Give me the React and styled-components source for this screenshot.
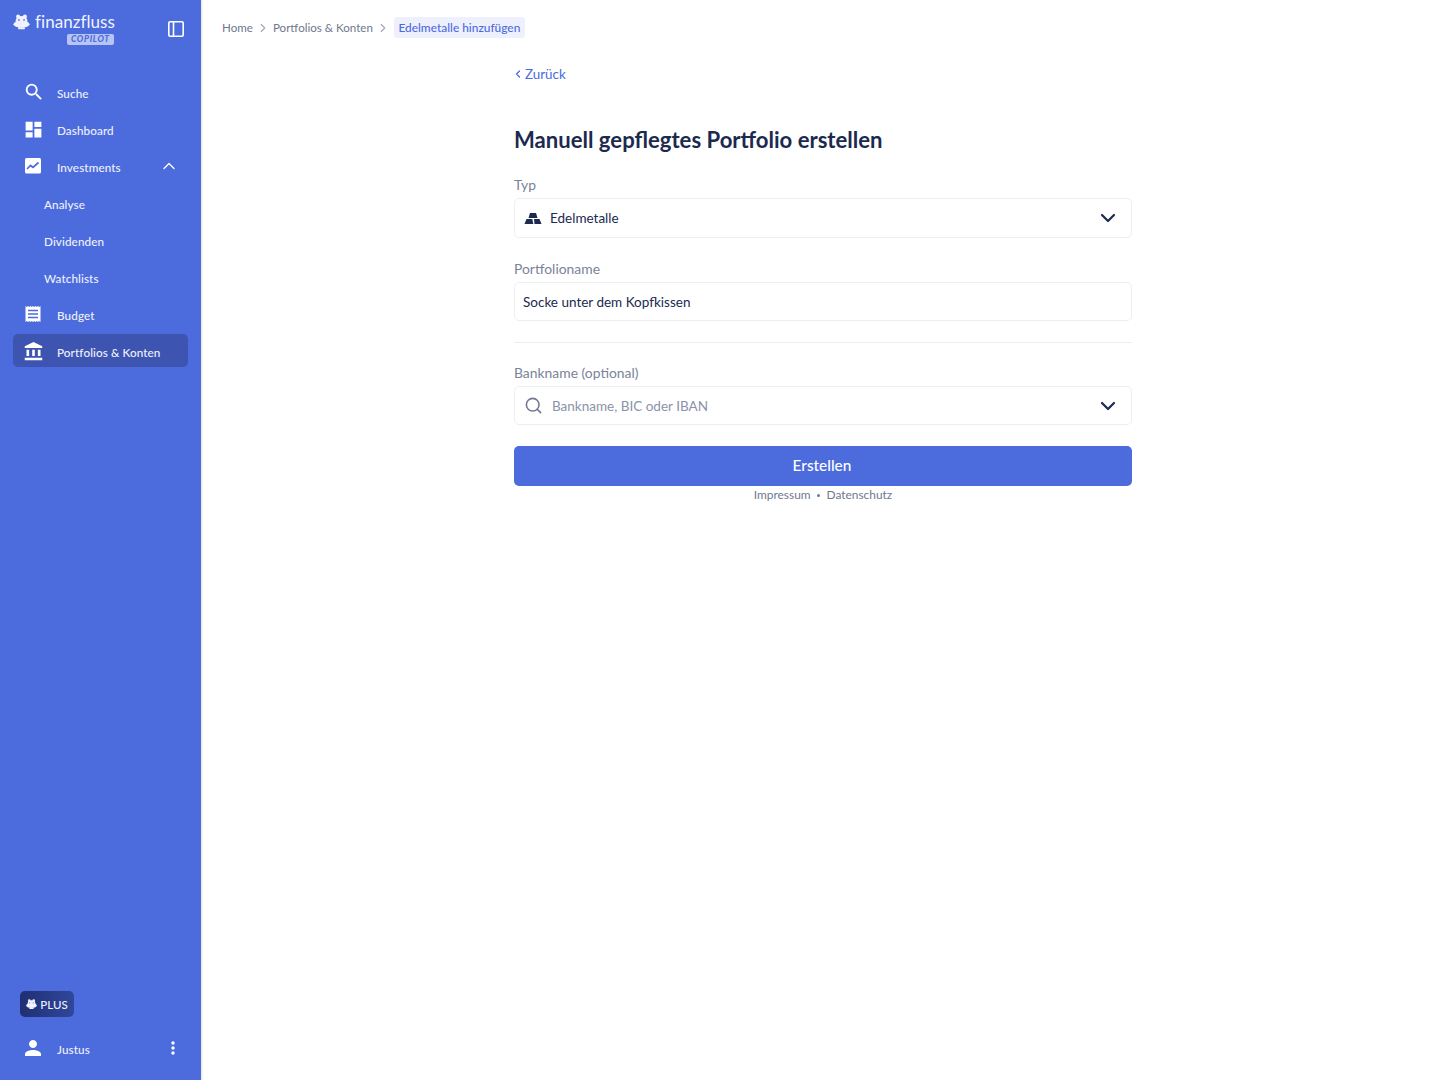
import React from 'react';
import styled, { createGlobalStyle } from 'styled-components';
import { MdSearch, MdDashboard, MdAccountBalance, MdPerson, MdMoreVert } from 'react-icons/md';
import { ChevronDown, ChevronUp, ChevronRight, ChevronLeft, Search } from 'lucide-react';

const Global = createGlobalStyle`
  html, body { margin: 0; padding: 0; background: #fff; }
  body { font-family: Lato, "Open Sans", sans-serif; color: #1b2a4e; }
  * { box-sizing: border-box; }
`;

const Page = styled.div`
  display: flex;
  height: 1080px;
`;

const Sidebar = styled.aside`
  width: 201px;
  flex-shrink: 0;
  background: #4c6bdd;
  color: #fff;
  display: flex;
  flex-direction: column;
  box-shadow: 1px 0 2px rgba(30, 40, 90, 0.15);
`;

const Header = styled.div`
  height: 75px;
  padding: 13px 17px 0 13px;
  display: flex;
  justify-content: space-between;
  align-items: flex-start;
`;

const Brand = styled.div`
  display: flex;
  flex-direction: column;
  align-items: flex-end;
`;

const BrandRow = styled.div`
  display: flex;
  align-items: center;
  gap: 5px;
  height: 18px;
`;

const BrandName = styled.span`
  font-size: 17px;
  line-height: 18px;
  letter-spacing: 0.05px;
  color: #f0f3fd;
`;

const Copilot = styled.span`
  margin-top: 3px;
  margin-right: 1px;
  width: 47px;
  height: 11px;
  border-radius: 2px;
  background: #b7c5f3;
  color: #4c6bdd;
  font-size: 8.5px;
  line-height: 11px;
  font-weight: 900;
  font-style: italic;
  text-align: center;
  letter-spacing: 0.7px;
`;

const PanelButton = styled.div`
  margin-top: 8px;
  display: flex;
`;

const Nav = styled.nav`
  flex: 1;
  padding: 0 13px;
  display: flex;
  flex-direction: column;
  gap: 4px;
`;

const NavItem = styled.div`
  height: 33px;
  display: flex;
  align-items: center;
  padding-left: ${p => (p.$sub ? '31px' : '12px')};
  padding-right: 12px;
  border-radius: 5px;
  background: ${p => (p.$active ? '#3d55b0' : 'transparent')};
`;

const NavIcon = styled.span`
  width: 32px;
  display: flex;
  align-items: center;
  flex-shrink: 0;
  margin-top: 1px;
  margin-left: -2px;
  margin-right: 2px;
`;

const UserIcon = styled(NavIcon)`
  margin-left: -4px;
  margin-right: 4px;
`;

const NavLabel = styled.span`
  flex: 1;
  padding-top: 2px;
  font-size: 11.7px;
  font-weight: 500;
  color: #eef1fd;
  letter-spacing: 0.1px;
`;

const Caret = styled(ChevronUp)`
  flex-shrink: 0;
  margin-right: -3px;
`;

const UserMenu = styled(MdMoreVert)`
  flex-shrink: 0;
  margin-right: -7px;
`;

const Footer = styled.div`
  padding: 0 13px 16px;
  display: flex;
  flex-direction: column;
  gap: 14px;
`;

const PlusBadge = styled.div`
  margin-left: 7px;
  width: 54px;
  height: 26px;
  border-radius: 5px;
  background: linear-gradient(90deg, #1f2f72, #30479b);
  display: flex;
  align-items: center;
  justify-content: center;
  gap: 3px;
  font-size: 11.5px;
  font-weight: 500;
  color: #eef1fd;
`;

const Main = styled.main`
  flex: 1;
  min-width: 0;
`;

const Breadcrumbs = styled.div`
  height: 55px;
  padding-left: 21px;
  display: flex;
  align-items: center;
  gap: 3px;
  font-size: 11.6px;
  color: #6f788e;
`;

const Crumb = styled.span`
  ${p =>
    p.$current &&
    `
    background: #eef1fd;
    color: #4c6bdd;
    padding: 0 4.5px;
    height: 21px;
    line-height: 21px;
    border-radius: 3px;
    margin-left: 1px;
    font-size: 11.9px;
    font-weight: 500;
  `}
`;

const FormWrap = styled.div`
  display: flex;
  justify-content: center;
  padding-left: 2px;
`;

const Form = styled.div`
  width: 618px;
`;

const BackLink = styled.div`
  height: 37px;
  display: flex;
  align-items: center;
  gap: 1px;
  color: #4c6bdd;
  font-size: 13.4px;
`;

const BackIcon = styled(ChevronLeft)`
  margin-left: -2px;
`;

const Title = styled.h1`
  margin: 32px 0 19px;
  font-size: 22.1px;
  line-height: 32px;
  font-weight: 700;
  color: #1b2a4e;
`;

const Label = styled.div`
  font-size: 13.9px;
  line-height: 20px;
  color: #7a8399;
  margin-bottom: 3px;
`;

const Field = styled.div`
  height: ${p => p.$h || 40}px;
  border: 1px solid #eceef2;
  border-radius: 5px;
  display: flex;
  align-items: center;
  padding: 0 11px 0 ${p => p.$pl || 8}px;
  font-size: 13.5px;
  color: ${p => (p.$placeholder ? '#8b93a8' : '#1b2a4e')};
  margin-bottom: ${p => p.$mb || 0}px;
`;

const FieldText = styled.span`
  flex: 1;
`;

const FieldIcon = styled.span`
  display: flex;
  width: ${p => p.$w}px;
  flex-shrink: 0;
`;

const Divider = styled.hr`
  margin: 21px 0 20px;
  border: 0;
  border-top: 1px solid #eceef2;
`;

const Submit = styled.button`
  display: block;
  width: 100%;
  height: 40px;
  margin-top: 21px;
  padding: 0 2px 2px 0;
  border: 0;
  border-radius: 5px;
  background: #4c6bdd;
  color: #fff;
  font: 500 15.4px Lato, sans-serif;
`;

const Legal = styled.div`
  margin-top: 1px;
  display: flex;
  justify-content: center;
  align-items: center;
  gap: 6.5px;
  font-size: 11.9px;
  line-height: 16px;
  color: #6f788e;
`;

const Dot = styled.i`
  width: 3px;
  height: 3px;
  border-radius: 50%;
  background: #6f788e;
`;

const Hippo = ({ size = 17 }) => (
  <svg width={size} height={size * 0.9} viewBox="0 0 20 18" fill="#f0f3fd">
    <circle cx="6" cy="3" r="2.4" />
    <circle cx="14" cy="3" r="2.4" />
    <ellipse cx="10" cy="8" rx="7" ry="5.5" />
    <ellipse cx="10" cy="12" rx="9.5" ry="4.2" />
    <rect x="6" y="15.5" width="8" height="2.5" rx="1" />
    <circle cx="7" cy="7" r="1" fill="#4c6bdd" />
    <circle cx="13" cy="7" r="1" fill="#4c6bdd" />
  </svg>
);

const PanelIcon = () => (
  <svg width="16" height="16" viewBox="0 0 16 16" fill="none" stroke="#fff" strokeWidth="1.6">
    <rect x="0.8" y="0.8" width="14.4" height="14.4" rx="1.2" />
    <path d="M5.5 1v14" />
  </svg>
);

const ChartIcon = () => (
  <svg width="18" height="18" viewBox="-1 0 18 18">
    <rect x="1" y="1" width="16" height="15.5" rx="1.5" fill="#fff" />
    <path d="M3 12l3.5-3.5 2.5 2L14.5 5.5" fill="none" stroke="#4c6bdd" strokeWidth="1.7" />
  </svg>
);

const ReceiptIcon = () => (
  <svg width="18" height="18" viewBox="-1 0 18 18">
    <path
      d="M1.5 1l1.25 1L4 1l1.25 1L6.5 1l1.25 1L9 1l1.25 1 1.25-1 1.25 1L14 1l1.25 1 1.25-1v16l-1.25-1L14 17l-1.25-1-1.25 1-1.25-1L9 17l-1.25-1-1.25 1-1.25-1L4 17l-1.25-1-1.25 1z"
      fill="#fff"
    />
    <path d="M4 5.5h10M4 9h10M4 12.5h10" stroke="#4c6bdd" strokeWidth="1.5" />
  </svg>
);

const BarsIcon = () => (
  <svg width="18" height="13" viewBox="0 0 18 13" fill="#1b2a4e">
    <path d="M6 1h6l1.5 5h-9z" />
    <path d="M2.5 7h5.8l1 5H0.5z" />
    <path d="M10 7h5.5l2 5H10.5z" />
  </svg>
);

const navItems = [
  { label: 'Suche', icon: <MdSearch size={22} /> },
  { label: 'Dashboard', icon: <MdDashboard size={21} /> },
  { label: 'Investments', icon: <ChartIcon />, open: true },
  { label: 'Analyse', sub: true },
  { label: 'Dividenden', sub: true },
  { label: 'Watchlists', sub: true },
  { label: 'Budget', icon: <ReceiptIcon /> },
  { label: 'Portfolios & Konten', icon: <MdAccountBalance size={21} />, active: true }
];

export default function App() {
  return (
    <Page>
      <Global />
      <Sidebar>
        <Header>
          <Brand>
            <BrandRow>
              <Hippo />
              <BrandName>finanzfluss</BrandName>
            </BrandRow>
            <Copilot>COPILOT</Copilot>
          </Brand>
          <PanelButton>
            <PanelIcon />
          </PanelButton>
        </Header>
        <Nav>
          {navItems.map(item => (
            <NavItem key={item.label} $sub={item.sub} $active={item.active}>
              {item.icon && <NavIcon>{item.icon}</NavIcon>}
              <NavLabel>{item.label}</NavLabel>
              {item.open && <Caret size={20} strokeWidth={1.6} />}
            </NavItem>
          ))}
        </Nav>
        <Footer>
          <PlusBadge>
            <Hippo size={11} />
            PLUS
          </PlusBadge>
          <NavItem>
            <UserIcon>
              <MdPerson size={24} />
            </UserIcon>
            <NavLabel>Justus</NavLabel>
            <UserMenu size={20} />
          </NavItem>
        </Footer>
      </Sidebar>
      <Main>
        <Breadcrumbs>
          <Crumb>Home</Crumb>
          <ChevronRight size={14} color="#a5abba" />
          <Crumb>Portfolios &amp; Konten</Crumb>
          <ChevronRight size={14} color="#a5abba" />
          <Crumb $current>Edelmetalle hinzufügen</Crumb>
        </Breadcrumbs>
        <FormWrap>
          <Form>
            <BackLink>
              <BackIcon size={12} strokeWidth={2.5} />
              Zurück
            </BackLink>
            <Title>Manuell gepflegtes Portfolio erstellen</Title>
            <Label>Typ</Label>
            <Field $mb={21} $pl={9}>
              <FieldIcon $w={26}>
                <BarsIcon />
              </FieldIcon>
              <FieldText>Edelmetalle</FieldText>
              <ChevronDown size={24} strokeWidth={2.2} />
            </Field>
            <Label>Portfolioname</Label>
            <Field $h={39}>Socke unter dem Kopfkissen</Field>
            <Divider />
            <Label>Bankname (optional)</Label>
            <Field $h={39} $pl={9} $placeholder>
              <FieldIcon $w={28}>
                <Search size={19} color="#6f788e" />
              </FieldIcon>
              <FieldText>Bankname, BIC oder IBAN</FieldText>
              <ChevronDown size={24} strokeWidth={2.2} color="#1b2a4e" />
            </Field>
            <Submit>Erstellen</Submit>
            <Legal>
              <span>Impressum</span>
              <Dot />
              <span>Datenschutz</span>
            </Legal>
          </Form>
        </FormWrap>
      </Main>
    </Page>
  );
}
